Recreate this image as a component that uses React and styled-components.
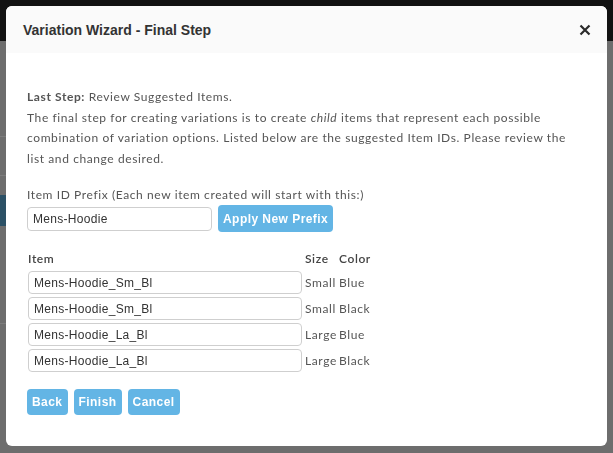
import React, { useState } from "react";
import styled, { createGlobalStyle } from "styled-components";

const GlobalStyle = createGlobalStyle`
  html, body {
    margin: 0;
    height: 100%;
  }
  body {
    background: #6d6d6d;
    font-family: "Liberation Sans", Arial, sans-serif;
  }
`;

// dimmed page behind the dialog
const Page = styled.div`
  height: 100vh;
  display: flex;
  flex-direction: column;
`;

const TopBar = styled.div`
  height: 41px;
  flex-shrink: 0;
  background: #121212;
`;

const SideNav = styled.div`
  width: 200px;
  display: flex;
  flex-direction: column;
`;

const NavItem = styled.div`
  height: ${(p) => p.h}px;
  margin-top: ${(p) => p.gap || 0}px;
  background: ${(p) => (p.active ? "#2b5065" : "transparent")};
  border-bottom: 1px solid ${(p) => (p.line ? "#7c7c7c" : "transparent")};
`;

const Overlay = styled.div`
  position: fixed;
  inset: 0;
  padding: 6px 6px 7px 6px;
  display: flex;
`;

const Modal = styled.div`
  flex: 1;
  display: flex;
  flex-direction: column;
  background: #fff;
  border-radius: 6px;
  overflow: hidden;
`;

const Header = styled.div`
  height: 47px;
  flex-shrink: 0;
  display: flex;
  align-items: center;
  justify-content: space-between;
  padding: 0 16px 0 17px;
  background: #fafafa;
`;

const Title = styled.h4`
  margin: 0;
  font-size: 14px;
  font-weight: 700;
  color: #333;
`;

const CloseButton = styled.button`
  border: 0;
  padding: 0;
  background: none;
  width: 12px;
  height: 12px;
  display: flex;
  cursor: pointer;
`;

const Body = styled.div`
  padding: 34px 20px 0 21px;
  font-family: Lato, "Liberation Sans", sans-serif;
  font-size: 12px;
  color: #555;
  letter-spacing: 0.6px;
`;

const Intro = styled.p`
  margin: 0;
  line-height: 20.6px;

  strong {
    font-weight: 700;
  }
`;

const Label = styled.div`
  margin-top: 18px;
  line-height: 16px;
`;

const PrefixRow = styled.div`
  margin-top: 2px;
  display: flex;
  align-items: center;
  gap: 6px;
`;

const TextInput = styled.input`
  box-sizing: border-box;
  width: ${(p) => p.w}px;
  height: ${(p) => p.h}px;
  margin: 0;
  padding: 0 5px;
  border: 1px solid #cfcfcf;
  border-radius: 4px;
  font-family: "Liberation Sans", Arial, sans-serif;
  font-size: 12px;
  letter-spacing: 0.3px;
  color: #333;
  outline: none;
`;

const Button = styled.button`
  height: ${(p) => (p.tall ? 27 : 26)}px;
  padding: 0 5px;
  border: 0;
  border-radius: 4px;
  background: #63b5e5;
  color: #fff;
  font-family: "Liberation Sans", Arial, sans-serif;
  font-size: 12px;
  font-weight: 700;
  letter-spacing: 0.45px;
  cursor: pointer;
`;

const ItemGrid = styled.div`
  margin-top: 18px;
  display: grid;
  grid-template-columns: 276px 35px auto;
  row-gap: 3px;
  align-items: center;
`;

const HeadCell = styled.div`
  padding-left: ${(p) => (p.text ? 2 : 1)}px;
  line-height: 18px;
  font-weight: 600;
  color: #444;
`;

const Cell = styled.div`
  padding-left: ${(p) => (p.text ? 2 : 1)}px;
  white-space: nowrap;
`;

const Footer = styled.div`
  margin-top: 17px;
  display: flex;
  gap: 6px;
`;

const CloseIcon = () => (
  <svg width="12" height="12" viewBox="0 0 12 12">
    <path d="M1.5 1.5 L10.5 10.5 M10.5 1.5 L1.5 10.5" stroke="#2a2a2a" strokeWidth="2.2" />
  </svg>
);

const suggested = [
  { id: "Mens-Hoodie_Sm_Bl", size: "Small", color: "Blue" },
  { id: "Mens-Hoodie_Sm_Bl", size: "Small", color: "Black" },
  { id: "Mens-Hoodie_La_Bl", size: "Large", color: "Blue" },
  { id: "Mens-Hoodie_La_Bl", size: "Large", color: "Black" },
];

const App = () => {
  const [prefix, setPrefix] = useState("Mens-Hoodie");
  const [items, setItems] = useState(suggested);

  const updateItem = (index, value) => {
    setItems(items.map((it, i) => (i === index ? { ...it, id: value } : it)));
  };

  return (
    <>
      <GlobalStyle />
      <Page>
        <TopBar />
        <SideNav>
          <NavItem h={95} line />
          <NavItem h={38} line />
          <NavItem h={30} gap={19} active />
          <NavItem h={97} line />
        </SideNav>
      </Page>

      <Overlay>
        <Modal>
          <Header>
            <Title>Variation Wizard - Final Step</Title>
            <CloseButton aria-label="Close">
              <CloseIcon />
            </CloseButton>
          </Header>

          <Body>
            <Intro>
              <strong>Last Step:</strong> Review Suggested Items.
              <br />
              The final step for creating variations is to create <em>child</em> items that represent each possible
              <br />
              combination of variation options. Listed below are the suggested Item IDs. Please review the
              <br />
              list and change desired.
            </Intro>

            <Label>Item ID Prefix (Each new item created will start with this:)</Label>
            <PrefixRow>
              <TextInput w={185} h={24} value={prefix} onChange={(e) => setPrefix(e.target.value)} />
              <Button tall>Apply New Prefix</Button>
            </PrefixRow>

            <ItemGrid>
              <HeadCell>Item</HeadCell>
              <HeadCell text>Size</HeadCell>
              <HeadCell>Color</HeadCell>
              {items.map((it, i) => (
                <React.Fragment key={i}>
                  <Cell>
                    <TextInput w={274} h={23} value={it.id} onChange={(e) => updateItem(i, e.target.value)} />
                  </Cell>
                  <Cell text>{it.size}</Cell>
                  <Cell>{it.color}</Cell>
                </React.Fragment>
              ))}
            </ItemGrid>

            <Footer>
              <Button>Back</Button>
              <Button>Finish</Button>
              <Button>Cancel</Button>
            </Footer>
          </Body>
        </Modal>
      </Overlay>
    </>
  );
};

export default App;
